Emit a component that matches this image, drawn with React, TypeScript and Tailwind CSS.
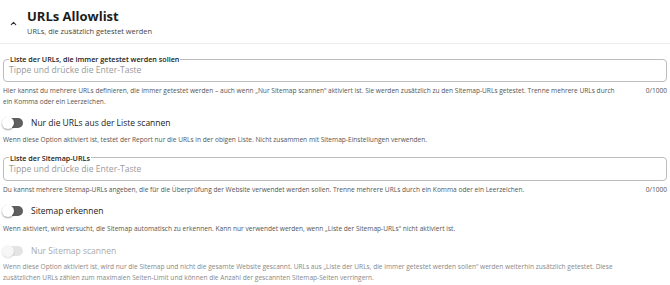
import React from 'react';

const Toggle: React.FC<{ disabled?: boolean }> = ({ disabled }) => (
  <div className="relative w-[20px] h-[10px]">
    <div className={`absolute inset-0 rounded-full ${disabled ? 'bg-[#e4e4e4]' : 'bg-[#5f5f5f]'}`} />
    <div
      className={`absolute left-[-1px] top-[-1px] w-[12px] h-[12px] rounded-full ${
        disabled ? 'bg-[#f6f6f6] shadow-[0_1px_2px_rgba(0,0,0,0.15)]' : 'bg-white shadow-[0_1px_2px_rgba(0,0,0,0.4)]'
      }`}
    />
  </div>
);

const Field: React.FC<{ label: string; helper: React.ReactNode; maxW: string }> = ({ label, helper, maxW }) => (
  <div>
    <fieldset className="border border-[#bdbdbd] rounded-[4px] h-[27px] px-[5px] pb-[2px]">
      <legend className="px-[1px] text-[7.2px] font-semibold leading-[8px] text-[#222]">{label}</legend>
      <div className="text-[8.6px] text-[#9a9a9a] leading-[12px] mt-[1px]">Tippe und drücke die Enter-Taste</div>
    </fieldset>
    <div className="flex justify-between items-start mt-[3px] text-[6.6px] leading-[11px] text-[#555]">
      <p className={maxW}>{helper}</p>
      <span className="text-[#555] pl-2">0/1000</span>
    </div>
  </div>
);

export default function App() {
  return (
    <div className="w-[670px] h-[285px] bg-white overflow-hidden" style={{ fontFamily: '"Open Sans", "DejaVu Sans", sans-serif' }}>
      {/* Header */}
      <div className="h-[44px] flex items-center border-b border-[#ececec]">
        <div className="w-[27px] flex justify-center pt-[4px]">
          <svg className="w-[9px] h-[9px] text-[#333]" fill="none" stroke="currentColor" viewBox="0 0 24 24">
            <path strokeLinecap="round" strokeLinejoin="round" strokeWidth={3} d="M6 15l6-6 6 6" />
          </svg>
        </div>
        <div className="pt-[1px]">
          <h2 className="text-[13px] font-bold leading-[16px] text-[#1d1d1d]">URLs Allowlist</h2>
          <p className="text-[7.4px] leading-[10px] text-[#444] mt-[2px]">URLs, die zusätzlich getestet werden</p>
        </div>
      </div>

      {/* Content */}
      <div className="px-[3px] pt-[11px]">
        <Field
          maxW="max-w-[612px]"
          label="Liste der URLs, die immer getestet werden sollen"
          helper="Hier kannst du mehrere URLs definieren, die immer getestet werden – auch wenn „Nur Sitemap scannen“ aktiviert ist. Sie werden zusätzlich zu den Sitemap-URLs getestet. Trenne mehrere URLs durch ein Komma oder ein Leerzeichen."
        />

        <div className="flex items-center gap-[8px] mt-[10px]">
          <Toggle />
          <span className="text-[8.5px] text-[#222]">Nur die URLs aus der Liste scannen</span>
        </div>
        <p className="text-[6.6px] leading-[11px] text-[#555] mt-[4px]">
          Wenn diese Option aktiviert ist, testet der Report nur die URLs in der obigen Liste. Nicht zusammen mit Sitemap-Einstellungen verwenden.
        </p>

        <div className="mt-[9px]">
          <Field
            maxW="max-w-[640px]"
            label="Liste der Sitemap-URLs"
            helper="Du kannst mehrere Sitemap-URLs angeben, die für die Überprüfung der Website verwendet werden sollen. Trenne mehrere URLs durch ein Komma oder ein Leerzeichen."
          />
        </div>

        <div className="flex items-center gap-[8px] mt-[10px]">
          <Toggle />
          <span className="text-[8.5px] text-[#222]">Sitemap erkennen</span>
        </div>
        <p className="text-[6.6px] leading-[11px] text-[#555] mt-[5px]">
          Wenn aktiviert, wird versucht, die Sitemap automatisch zu erkennen. Kann nur verwendet werden, wenn „Liste der Sitemap-URLs“ nicht aktiviert ist.
        </p>

        <div className="flex items-center gap-[8px] mt-[11px]">
          <Toggle disabled />
          <span className="text-[8.5px] text-[#aaa]">Nur Sitemap scannen</span>
        </div>
        <p className="text-[6.6px] leading-[11px] text-[#888] mt-[4px] max-w-[645px]">
          Wenn diese Option aktiviert ist, wird nur die Sitemap und nicht die gesamte Website gescannt. URLs aus „Liste der URLs, die immer getestet werden sollen“ werden weiterhin zusätzlich getestet. Diese zusätzlichen URLs zählen zum maximalen Seiten-Limit und können die Anzahl der gescannten Sitemap-Seiten verringern.
        </p>
      </div>
    </div>
  );
}
